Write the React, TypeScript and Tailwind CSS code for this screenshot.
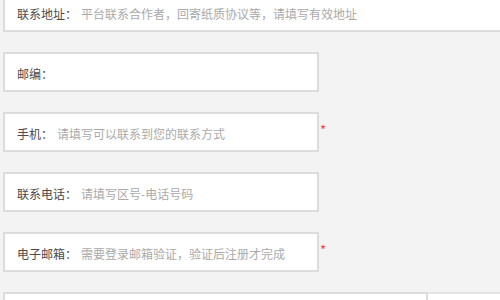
const font = { fontFamily: '"Noto Sans CJK SC", "Liberation Sans", sans-serif' };

type Field = {
  label: string;
  hint?: string;
  width: string;
  required?: boolean;
};

const fields: Field[] = [
  { label: "联系地址：", hint: "平台联系合作者，回寄纸质协议等，请填写有效地址", width: "w-[620px]" },
  { label: "邮编：", width: "w-[316px]" },
  { label: "手机：", hint: "请填写可以联系到您的联系方式", width: "w-[316px]", required: true },
  { label: "联系电话：", hint: "请填写区号-电话号码", width: "w-[316px]" },
  { label: "电子邮箱：", hint: "需要登录邮箱验证，验证后注册才完成", width: "w-[316px]", required: true },
];

const Row = ({ label, hint, width, required }: Field) => (
  <div className="flex items-start">
    <div
      className={`${width} h-10 shrink-0 flex items-center pl-3 pt-[3px] bg-white border-2 border-[#dcdcdc] text-[12px]`}
    >
      <span className="text-[#4a4a4a]">{label}</span>
      {hint && <span className="ml-1 text-[#aaa]">{hint}</span>}
    </div>
    {required && <span className="ml-px mt-[10px] text-[13px] leading-4 text-[#f44]">*</span>}
  </div>
);

export default function App() {
  return (
    <div className="w-[500px] h-[300px] overflow-hidden bg-[#f3f3f3]" style={font}>
      <div className="flex flex-col gap-5 pl-[3px] -mt-2">
        {fields.map((f) => (
          <Row key={f.label} {...f} />
        ))}
        {/* last row, cut off at the bottom */}
        <div className="flex">
          <div className="w-[425px] h-10 shrink-0 bg-white border-2 border-[#dcdcdc]" />
          <div className="w-[200px] h-10 shrink-0 bg-white border-t-2 border-[#e4e4e4]" />
        </div>
      </div>
    </div>
  );
}
